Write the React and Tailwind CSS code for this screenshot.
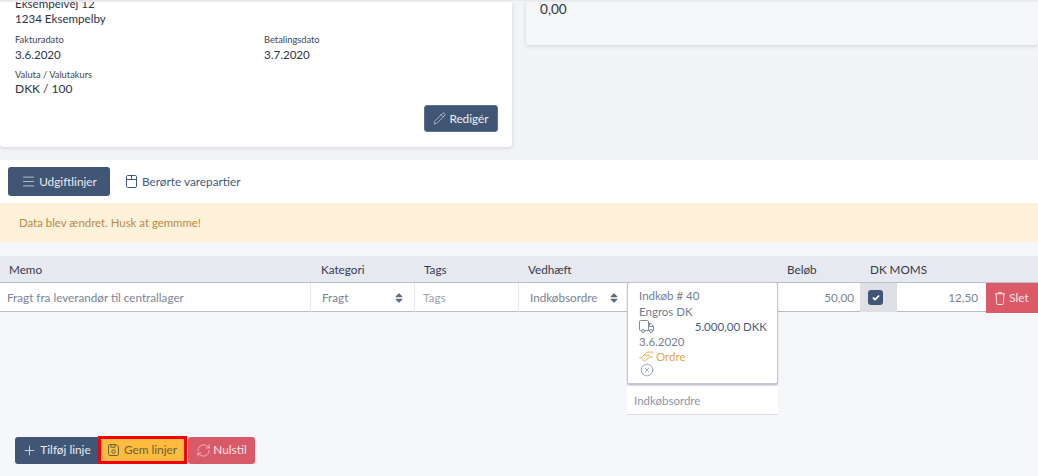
import React from "react";
import { Pencil, Menu, Plus, RefreshCw, CircleX, Check } from "lucide-react";
import { FaSort } from "react-icons/fa";

const lato = { fontFamily: '"Lato", "Liberation Sans", sans-serif' };

function BoxIcon() {
  return (
    <svg width="11" height="13" viewBox="0 0 11 13" fill="none" stroke="#3f5a7d" strokeWidth="1" className="shrink-0">
      <rect x="0.5" y="0.5" width="10" height="12" rx="1.2" />
      <path d="M0.5 4.5H10.5M5.5 0.5V4.5" />
    </svg>
  );
}

function TrashIcon() {
  return (
    <svg width="10" height="13" viewBox="0 0 10 13" fill="none" stroke="#fbe4e6" strokeWidth="1" className="shrink-0">
      <path d="M0.2 1.8H9.8M3.2 1.8V.9C3.2 .6 3.5 .5 3.8 .5H6.2C6.5 .5 6.8 .6 6.8 .9V1.8M1 1.8L1.7 11.7C1.7 12.2 2.1 12.5 2.6 12.5H7.4C7.9 12.5 8.3 12.2 8.3 11.7L9 1.8" />
    </svg>
  );
}

function SaveIcon() {
  return (
    <svg width="11" height="12" viewBox="0 0 11 12" fill="none" stroke="#6b6136" strokeWidth="1" className="shrink-0">
      <path d="M1.5 .5H8L10.5 3V10.2C10.5 10.9 10 11.5 9.3 11.5H1.7C1 11.5 .5 10.9 .5 10.2V1.5C.5 1 1 .5 1.5 .5Z" />
      <path d="M2.8 .5V3.2H7V.5" />
      <circle cx="5.5" cy="7.6" r="1.7" />
    </svg>
  );
}

function TruckIcon() {
  return (
    <svg width="15" height="13" viewBox="0 0 15 13" fill="none" stroke="#717e92" strokeWidth="0.9" className="shrink-0">
      <path d="M2.5 10.5H1.5C.9 10.5 .5 10 .5 9.5V1.5C.5 1 .9 .5 1.5 .5H8.5C9 .5 9.5 1 9.5 1.5V10.5H5.5" />
      <path d="M9.5 3.5H12L14.5 6.5V10.5H13.5M10.5 10.5H9.5M10.5 3.5V6.5H14.5" />
      <circle cx="4" cy="11" r="1.5" />
      <circle cx="12" cy="11" r="1.5" />
    </svg>
  );
}

function HandshakeIcon() {
  return (
    <svg width="15" height="11" viewBox="0 0 15 11" fill="none" stroke="#e0a550" strokeWidth="0.9" className="shrink-0">
      <path d="M.3 6.6H2.6L6.6 2.4C7.4 1.5 8.3 1.1 9.4 1.1H14.7" />
      <path d="M5.2 4.2H9.8L11.6 6.2H14.2" />
      <path d="M3.3 8.7L4.6 9.8C5.1 10.2 5.7 10.2 6.2 9.8L10.9 6" />
      <path d="M2.4 7.4L3.6 8.5M4.6 6.4L6.2 8" />
    </svg>
  );
}

export default function App() {
  return (
    <div style={lato} className="w-[1038px] h-[476px] overflow-hidden bg-[#f5f7fa] text-[#2d3a4f]">
      <section className="h-[160px] bg-[#f3f4f6] pt-px flex items-start gap-[14px] border-t border-[#e9ebee]">
        <div className="w-[512px] h-[145px] bg-white rounded-b-[3px] shadow-[0_1px_4px_rgba(60,70,90,0.18)] pl-[15px] pr-[14px] overflow-hidden">
          <div className="-mt-[6px] text-[11.6px] leading-[15px] text-[#2d3446]">
            <div>Eksempelvej 12</div>
            <div>1234 Eksempelby</div>
          </div>
          <div className="grid grid-cols-[249px_1fr] mt-[8px]">
            <div>
              <div className="text-[9.3px] leading-[12px] text-[#3d4559]">Fakturadato</div>
              <div className="text-[11.6px] leading-[15px] mt-[1px] text-[#2d3446]">3.6.2020</div>
            </div>
            <div>
              <div className="text-[9.3px] leading-[12px] text-[#3d4559]">Betalingsdato</div>
              <div className="text-[11.6px] leading-[15px] mt-[1px] text-[#2d3446]">3.7.2020</div>
            </div>
          </div>
          <div className="mt-[7px] text-[9.3px] leading-[12px] text-[#3d4559]">Valuta / Valutakurs</div>
          <div className="text-[12px] leading-[15px] text-[#2d3446]">DKK / 100</div>
          <div className="flex justify-end mt-[9px]">
            <button className="h-[27px] w-[74px] rounded-[3px] bg-[#415674] border border-[#5a7190] text-[#eef1f5] text-[11.8px] flex items-center justify-center gap-[3px]">
              <Pencil size={13} strokeWidth={1.1} />
              Redigér
            </button>
          </div>
        </div>
        <div className="flex-1 h-[43px] bg-[#f5f6f8] rounded-b-[3px] shadow-[0_1px_4px_rgba(60,70,90,0.18)] px-[14px] overflow-hidden">
          <div className="text-[13.6px] leading-[16px] text-[#2d3446] -mt-px">0,00</div>
        </div>
      </section>

      <nav className="h-[43px] bg-white flex items-start pt-[7px] pl-[8px] gap-[16px]">
        <button className="h-[29px] w-[102px] rounded-[3px] bg-[#415674] text-[#e8ecf1] text-[11.8px] flex items-center justify-center gap-[3px]">
          <Menu size={15} strokeWidth={1.1} />
          Udgiftlinjer
        </button>
        <a className="h-[29px] flex items-center gap-[5px] text-[11.8px] text-[#3f5a7d]">
          <BoxIcon />
          Berørte varepartier
        </a>
      </nav>

      <div className="h-[39px] bg-[#fef1da] flex items-center pl-[19px] pt-px text-[11.4px] text-[#b98a46]">
        Data blev ændret. Husk at gemmme!
      </div>

      <div className="mt-[14px] grid grid-cols-[311px_104px_104px_260px_81px_126px_52px] h-[27px] pt-[1px] bg-[#e6e9f0] border-b border-[#b9bcc9] text-[11.7px] text-[#343a4e] items-center">
        <div className="pl-[9px]">Memo</div>
        <div className="pl-[10px]">Kategori</div>
        <div className="pl-[9px]">Tags</div>
        <div className="pl-[9px]">Vedhæft</div>
        <div className="pl-[8px]">Beløb</div>
        <div className="pl-[10px]">DK MOMS</div>
        <div />
      </div>

      <div className="relative grid grid-cols-[311px_104px_104px_260px_81px_37px_89px_52px] h-[29px] bg-white border-b border-[#b9bcc9] text-[11.7px] text-[#7a8496] items-center">
        <div className="pl-[7px] pt-[1px] border-r border-[#e6e8ee] h-full flex items-center whitespace-nowrap">Fragt fra leverandør til centrallager</div>
        <div className="pl-[11px] pr-[9px] pt-[1px] border-r border-[#e6e8ee] h-full flex items-center justify-between">
          Fragt <FaSort size={12} className="text-[#5f6b7e]" />
        </div>
        <div className="pl-[8px] pt-[1px] h-full flex items-center text-[#9aa3b1] border-r border-[#e6e8ee]">Tags</div>
        <div className="h-full flex items-center pt-[1px]">
          <div className="w-[108px] pl-[11px] flex items-center justify-between pr-[7px]">
            Indkøbsordre <FaSort size={12} className="text-[#5f6b7e] shrink-0" />
          </div>
        </div>
        <div className="text-right pr-[6px] pt-[1px]">50,00</div>
        <div className="h-full bg-[#dee0e6] flex items-center pl-[8px]">
          <span className="w-[15px] h-[15px] rounded-[3px] bg-[#415674] flex items-center justify-center">
            <Check size={8} strokeWidth={5} className="text-white" />
          </span>
        </div>
        <div className="text-right pr-[8px] pt-[1px]">12,50</div>
        <button className="h-[30px] -mb-px bg-[#dc5a68] text-[#fbe4e6] flex items-center justify-center gap-[4px] text-[11.7px]">
          <TrashIcon />
          Slet
        </button>

        <div className="absolute left-[627px] top-[-1px] w-[151px] h-[103px] bg-white border border-[#c3c6d0] border-b-[2px] rounded-[3px] shadow-[0_1px_2px_rgba(60,70,90,0.2)] pl-[11px] pr-[10px] pt-[5px] text-[11.5px] leading-[15px] text-[#717e92]">
          <div>Indkøb # 40</div>
          <div className="mt-px">Engros DK</div>
          <div className="flex items-center justify-between text-[#4b607e] h-[14px]">
            <TruckIcon />
            <span>5.000,00 DKK</span>
          </div>
          <div className="mt-px">3.6.2020</div>
          <div className="flex items-center gap-[2px] text-[#e0a550]">
            <HandshakeIcon />
            Ordre
          </div>
          <CircleX size={14} strokeWidth={1} className="ml-px -mt-px text-[#5f6e86]" />
        </div>
        <div className="absolute left-[627px] top-[103px] w-[151px] h-[29px] bg-white border-b border-[#d8dbe2] flex items-center pl-[7px] pt-[1px] text-[11.5px] text-[#8d96a5]">
          Indkøbsordre
        </div>
      </div>

      <div className="mt-[124px] pl-[15px] flex items-center">
        <button className="h-[27px] w-[83px] rounded-l-[3px] bg-[#415674] text-[#e8ecf1] text-[11.8px] flex items-center justify-center gap-[3px]">
          <Plus size={15} strokeWidth={1.3} />
          Tilføj linje
        </button>
        <button className="h-[28px] w-[89px] bg-[#fdbb3f] border-[3px] border-[#f50000] text-[#6b6136] text-[11.8px] flex items-center justify-center gap-[5px]">
          <SaveIcon />
          Gem linjer
        </button>
        <button className="h-[27px] w-[67px] ml-px rounded-[3px] bg-[#d85a69] text-[#fbe4e6] text-[11.8px] flex items-center justify-center gap-[2px]">
          <RefreshCw size={15} strokeWidth={1} />
          Nulstil
        </button>
      </div>
    </div>
  );
}
